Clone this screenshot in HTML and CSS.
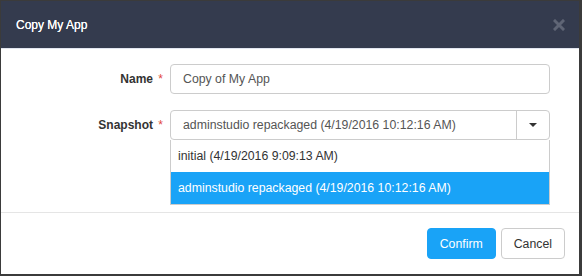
FILE: index.html
```html
<!DOCTYPE html>
<html lang="en">
<head>
    <meta charset="UTF-8">
    <title>Copy My App</title>
    <link rel="stylesheet" href="styles.css">
</head>
<body>

    <div class="modal">
        <div class="modal-header">
            <h3 class="modal-title">Copy My App</h3>
            <span class="close">
                <svg width="12" height="12" viewBox="0 0 12 12">
                    <path d="M2 2 L10 10 M10 2 L2 10" stroke="#5f6575" stroke-width="3" stroke-linecap="square"/>
                </svg>
            </span>
        </div>

        <div class="modal-body">
            <div class="form-row">
                <label class="form-label">Name <span class="req">*</span></label>
                <div class="field">
                    <input type="text" class="text-input" value="Copy of My App">
                </div>
            </div>

            <div class="form-row">
                <label class="form-label">Snapshot <span class="req">*</span></label>
                <div class="field">
                    <div class="select">
                        <span class="select-text">adminstudio repackaged (4/19/2016 10:12:16 AM)</span>
                        <span class="select-btn"><span class="caret"></span></span>
                    </div>
                    <ul class="dropdown">
                        <li>initial (4/19/2016 9:09:13 AM)</li>
                        <li class="active">adminstudio repackaged (4/19/2016 10:12:16 AM)</li>
                    </ul>
                </div>
            </div>
        </div>

        <div class="modal-footer">
            <button class="btn btn-primary">Confirm</button>
            <button class="btn btn-default">Cancel</button>
        </div>
    </div>

</body>
</html>
```

FILE: styles.css
```css
body {
    margin: 0;
    background-color: #3b3b3b;
    font-family: "Liberation Sans", Arial, sans-serif;
    font-size: 12px;
    color: #333;
}
.modal {
    width: 578px;
    height: 273px;
    margin: 1px 0 0 1px;
    background: white;
    display: flex;
    flex-direction: column;
}
.modal-header {
    height: 47px;
    background-color: #343b4e;
    border-bottom: 1px solid #e1e5f0;
    display: flex;
    align-items: center;
    justify-content: space-between;
    padding: 0 14px 0 15px;
}
.modal-title {
    margin: 0;
    color: white;
    font-size: 12px;
    font-weight: normal;
    text-shadow: 0 0 0.5px white;
}
.close {
    display: flex;
    margin-top: 1px;
}
.modal-body {
    height: 164px;
    padding-top: 15px;
    box-sizing: border-box;
    border-bottom: 1px solid #e5e5e5;
}
.form-row {
    display: flex;
    align-items: center;
    margin-bottom: 16px;
}
.form-label {
    width: 162px;
    text-align: right;
    font-weight: bold;
    margin-right: 7px;
}
.req {
    color: #e2483d;
    font-weight: normal;
    margin-left: 2px;
}
.field {
    width: 380px;
    position: relative;
}
.text-input {
    width: 100%;
    height: 30px;
    box-sizing: border-box;
    border: 1px solid #ccc;
    border-radius: 4px;
    padding: 0 12px;
    font-family: inherit;
    font-size: 12.3px;
    color: #555;
    margin: 0;
}
.select {
    height: 30px;
    box-sizing: border-box;
    border: 1px solid #ccc;
    border-radius: 4px;
    display: flex;
    align-items: center;
    color: #555;
    font-size: 12.3px;
}
.select-text {
    flex: 1;
    padding-left: 12px;
}
.select-btn {
    width: 32px;
    height: 100%;
    border-left: 1px solid #ccc;
    display: flex;
    align-items: center;
    justify-content: center;
}
.caret {
    width: 0;
    height: 0;
    border-left: 4px solid transparent;
    border-right: 4px solid transparent;
    border-top: 4px solid #333;
}
.dropdown {
    position: absolute;
    top: 30px;
    left: 0;
    right: 0;
    margin: 0;
    padding: 0;
    list-style: none;
    background: white;
    border: 1px solid #ccc;
    border-top: none;
    font-size: 12.3px;
}
.dropdown li {
    height: 32px;
    line-height: 32px;
    padding-left: 7px;
    color: #333;
}
.dropdown li.active {
    background-color: #19a3f7;
    color: white;
}
.modal-footer {
    display: flex;
    justify-content: flex-end;
    padding: 15px 14px 0 0;
}
.btn {
    height: 31px;
    padding: 0 12px;
    border-radius: 4px;
    font-family: inherit;
    font-size: 12.3px;
    cursor: pointer;
    margin-left: 5px;
}
.btn-primary {
    background-color: #19a3f7;
    border: 1px solid #19a3f7;
    color: white;
}
.btn-default {
    background-color: white;
    border: 1px solid #ccc;
    color: #333;
}
```
